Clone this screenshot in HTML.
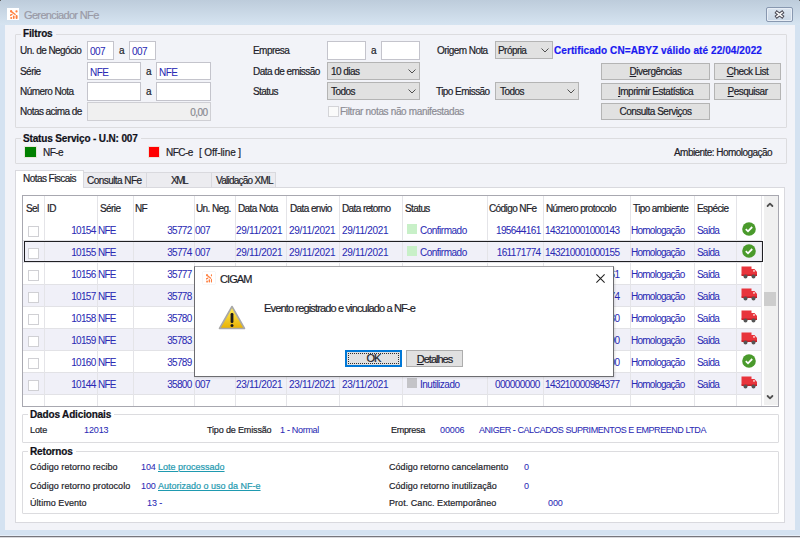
<!DOCTYPE html>
<html><head><meta charset="utf-8"><style>
html,body{margin:0;padding:0;}
body{width:800px;height:538px;overflow:hidden;position:relative;background:#d4e2f1;font-family:"Liberation Sans",sans-serif;}
.t{position:absolute;white-space:nowrap;-webkit-text-stroke:0.2px currentColor;}
</style></head><body>
<div style="position:absolute;left:0;top:0;width:800px;height:25px;background:linear-gradient(#bdccdb,#d6e4f1)"></div>
<div style="position:absolute;left:7px;top:8px;width:12px;height:12px;background:#fff"></div>
<svg style="position:absolute;left:10px;top:10px" width="7.6" height="9" viewBox="0 0 7.6 9"><g fill="#ff8040"><rect x="0" y="0" width="2.2" height="2.4" rx="1"/><rect x="5.4" y="0.3" width="2.2" height="2.2" rx="1"/>
<path d="M1.8 1 L6 4.2 L5.2 5.3 L1 2.2Z"/><path d="M0 4.4 L2.8 3.4 L2.4 5 L0 6.2Z"/>
<rect x="0.2" y="7" width="2" height="2" rx="0.9"/><rect x="2.9" y="5.6" width="1.7" height="3.4" rx="0.8"/><rect x="5.6" y="5" width="2" height="4" rx="0.9"/></g></svg>
<div class="t" style="left:24px;top:10px;font-size:11px;line-height:11px;color:#9a9aa6;letter-spacing:-0.65px;">Gerenciador NFe</div>
<div style="position:absolute;left:766px;top:7px;width:27px;height:15px;box-sizing:border-box;border:1px solid #8898b0;border-radius:2px;background:linear-gradient(#dbe5f0,#c9d7e6);box-shadow:inset 0 0 0 1px #e8eef6"></div>
<svg style="position:absolute;left:773px;top:9px" width="13" height="11" viewBox="0 0 13 11">
<path d="M4 3.6 L9 7.4 M9 3.6 L4 7.4" stroke="#4a4a56" stroke-width="3.6" stroke-linecap="square"/>
<path d="M4 3.6 L9 7.4 M9 3.6 L4 7.4" stroke="#f6f6f6" stroke-width="1.7" stroke-linecap="square"/></svg>
<div style="position:absolute;left:5px;top:25px;width:790px;height:505px;box-sizing:border-box;background:#f2f3f8;"></div>
<div style="position:absolute;left:0px;top:0px;width:1px;height:1px;box-sizing:border-box;background:#606060;"></div>
<div style="position:absolute;left:799px;top:0px;width:1px;height:1px;box-sizing:border-box;background:#606060;"></div>
<div style="position:absolute;left:0px;top:535px;width:800px;height:1px;box-sizing:border-box;background:#e6eef8;"></div>
<div style="position:absolute;left:0px;top:536px;width:800px;height:1px;box-sizing:border-box;background:#76767c;"></div>
<div style="position:absolute;left:0px;top:537px;width:800px;height:1px;box-sizing:border-box;background:#d8d8dc;"></div>
<div style="position:absolute;left:15px;top:34px;width:772px;height:94px;box-sizing:border-box;border:1px solid #dcdcdf;border-radius:1px;"></div>
<div class="t" style="left:21px;top:29px;font-size:10px;line-height:10px;color:#101018;letter-spacing:-0.15px;font-weight:bold;background:#f2f3f8;padding:0 3px 0 2px;">Filtros</div>
<div class="t" style="left:20px;top:46px;font-size:10px;line-height:10px;color:#1e1e2a;letter-spacing:-0.55px;">Un. de Negócio</div>
<div class="t" style="left:20px;top:67px;font-size:10px;line-height:10px;color:#1e1e2a;letter-spacing:-0.55px;">Série</div>
<div class="t" style="left:20px;top:87px;font-size:10px;line-height:10px;color:#1e1e2a;letter-spacing:-0.55px;">Número Nota</div>
<div class="t" style="left:20px;top:107px;font-size:10px;line-height:10px;color:#1e1e2a;letter-spacing:-0.55px;">Notas acima de</div>
<div style="position:absolute;left:87px;top:41px;width:27px;height:19px;box-sizing:border-box;background:#fff;border:1px solid #c4c4cc;"></div>
<div class="t" style="left:90px;top:47px;font-size:10px;line-height:10px;color:#2a2ab4;letter-spacing:-0.55px;-webkit-text-stroke:0.05px currentColor;">007</div>
<div class="t" style="left:119px;top:46px;font-size:10px;line-height:10px;color:#1e1e2a;letter-spacing:-0.55px;">a</div>
<div style="position:absolute;left:129px;top:41px;width:27px;height:19px;box-sizing:border-box;background:#fff;border:1px solid #c4c4cc;"></div>
<div class="t" style="left:132px;top:47px;font-size:10px;line-height:10px;color:#2a2ab4;letter-spacing:-0.55px;-webkit-text-stroke:0.05px currentColor;">007</div>
<div style="position:absolute;left:87px;top:62px;width:54px;height:18px;box-sizing:border-box;background:#fff;border:1px solid #c4c4cc;"></div>
<div class="t" style="left:90px;top:68px;font-size:10px;line-height:10px;color:#2a2ab4;letter-spacing:-0.55px;-webkit-text-stroke:0.05px currentColor;">NFE</div>
<div class="t" style="left:146px;top:67px;font-size:10px;line-height:10px;color:#1e1e2a;letter-spacing:-0.55px;">a</div>
<div style="position:absolute;left:156px;top:62px;width:55px;height:18px;box-sizing:border-box;background:#fff;border:1px solid #c4c4cc;"></div>
<div class="t" style="left:159px;top:68px;font-size:10px;line-height:10px;color:#2a2ab4;letter-spacing:-0.55px;-webkit-text-stroke:0.05px currentColor;">NFE</div>
<div style="position:absolute;left:87px;top:82px;width:54px;height:19px;box-sizing:border-box;background:#fff;border:1px solid #c4c4cc;"></div>
<div class="t" style="left:146px;top:87px;font-size:10px;line-height:10px;color:#1e1e2a;letter-spacing:-0.55px;">a</div>
<div style="position:absolute;left:156px;top:82px;width:55px;height:19px;box-sizing:border-box;background:#fff;border:1px solid #c4c4cc;"></div>
<div style="position:absolute;left:87px;top:102px;width:124px;height:19px;box-sizing:border-box;background:#f0f0f0;border:1px solid #cfcfd4;"></div>
<div class="t" style="right:593px;top:108px;font-size:10px;line-height:10px;color:#8a8a90;letter-spacing:-0.55px;margin-right:-0.55px;">0,00</div>
<div class="t" style="left:253px;top:46px;font-size:10px;line-height:10px;color:#1e1e2a;letter-spacing:-0.55px;">Empresa</div>
<div class="t" style="left:253px;top:67px;font-size:10px;line-height:10px;color:#1e1e2a;letter-spacing:-0.55px;">Data de emissão</div>
<div class="t" style="left:253px;top:87px;font-size:10px;line-height:10px;color:#1e1e2a;letter-spacing:-0.55px;">Status</div>
<div style="position:absolute;left:327px;top:41px;width:39px;height:19px;box-sizing:border-box;background:#fff;border:1px solid #c4c4cc;"></div>
<div class="t" style="left:371px;top:46px;font-size:10px;line-height:10px;color:#1e1e2a;letter-spacing:-0.55px;">a</div>
<div style="position:absolute;left:381px;top:41px;width:39px;height:19px;box-sizing:border-box;background:#fff;border:1px solid #c4c4cc;"></div>
<div style="position:absolute;left:327px;top:62px;width:93px;height:18px;box-sizing:border-box;background:#e1e1e1;border:1px solid #b4b4b4;"></div>
<div class="t" style="left:331px;top:67px;font-size:10px;line-height:10px;color:#1e1e2a;letter-spacing:-0.55px;">10 dias</div>
<svg style="position:absolute;left:408px;top:69px" width="8" height="5" viewBox="0 0 8 5"><path d="M0.5 0.5 L4 4 L7.5 0.5" stroke="#505050" stroke-width="1" fill="none"/></svg>
<div style="position:absolute;left:327px;top:82px;width:93px;height:18px;box-sizing:border-box;background:#e1e1e1;border:1px solid #b4b4b4;"></div>
<div class="t" style="left:331px;top:87px;font-size:10px;line-height:10px;color:#1e1e2a;letter-spacing:-0.55px;">Todos</div>
<svg style="position:absolute;left:408px;top:89px" width="8" height="5" viewBox="0 0 8 5"><path d="M0.5 0.5 L4 4 L7.5 0.5" stroke="#505050" stroke-width="1" fill="none"/></svg>
<div style="position:absolute;left:328px;top:106px;width:11px;height:11px;box-sizing:border-box;background:#fafafa;border:1px solid #d4d4d8;"></div>
<div class="t" style="left:340px;top:107px;font-size:10px;line-height:10px;color:#8c8c94;letter-spacing:-0.35px;">Filtrar notas não manifestadas</div>
<div class="t" style="left:437px;top:46px;font-size:10px;line-height:10px;color:#1e1e2a;letter-spacing:-0.55px;">Origem Nota</div>
<div class="t" style="left:436px;top:87px;font-size:10px;line-height:10px;color:#1e1e2a;letter-spacing:-0.55px;">Tipo Emissão</div>
<div style="position:absolute;left:495px;top:41px;width:58px;height:18px;box-sizing:border-box;background:#e1e1e1;border:1px solid #b4b4b4;"></div>
<div class="t" style="left:498px;top:46px;font-size:10px;line-height:10px;color:#1e1e2a;letter-spacing:-0.55px;">Própria</div>
<svg style="position:absolute;left:541px;top:48px" width="8" height="5" viewBox="0 0 8 5"><path d="M0.5 0.5 L4 4 L7.5 0.5" stroke="#505050" stroke-width="1" fill="none"/></svg>
<div style="position:absolute;left:495px;top:82px;width:84px;height:18px;box-sizing:border-box;background:#e1e1e1;border:1px solid #b4b4b4;"></div>
<div class="t" style="left:500px;top:87px;font-size:10px;line-height:10px;color:#1e1e2a;letter-spacing:-0.55px;">Todos</div>
<svg style="position:absolute;left:567px;top:89px" width="8" height="5" viewBox="0 0 8 5"><path d="M0.5 0.5 L4 4 L7.5 0.5" stroke="#505050" stroke-width="1" fill="none"/></svg>
<div class="t" style="left:554px;top:46px;font-size:10px;line-height:10px;color:#1a1af0;letter-spacing:0.09px;font-weight:bold;">Certificado CN=ABYZ válido até 22/04/2022</div>
<div style="position:absolute;left:601px;top:63px;width:109px;height:17px;box-sizing:border-box;background:#e1e1e1;border:1px solid #b4b4b4;"></div>
<div class="t" style="left:601px;width:109px;text-align:center;top:67px;font-size:10px;line-height:10px;color:#1e1e2a;letter-spacing:-0.5px"><u>D</u>ivergências</div>
<div style="position:absolute;left:714px;top:63px;width:67px;height:17px;box-sizing:border-box;background:#e1e1e1;border:1px solid #b4b4b4;"></div>
<div class="t" style="left:714px;width:67px;text-align:center;top:67px;font-size:10px;line-height:10px;color:#1e1e2a;letter-spacing:-0.5px"><u>C</u>heck List</div>
<div style="position:absolute;left:601px;top:83px;width:109px;height:17px;box-sizing:border-box;background:#e1e1e1;border:1px solid #b4b4b4;"></div>
<div class="t" style="left:601px;width:109px;text-align:center;top:87px;font-size:10px;line-height:10px;color:#1e1e2a;letter-spacing:-0.5px"><u>I</u>mprimir Estatística</div>
<div style="position:absolute;left:714px;top:83px;width:67px;height:17px;box-sizing:border-box;background:#e1e1e1;border:1px solid #b4b4b4;"></div>
<div class="t" style="left:714px;width:67px;text-align:center;top:87px;font-size:10px;line-height:10px;color:#1e1e2a;letter-spacing:-0.5px"><u>P</u>esquisar</div>
<div style="position:absolute;left:601px;top:103px;width:109px;height:17px;box-sizing:border-box;background:#e1e1e1;border:1px solid #b4b4b4;"></div>
<div class="t" style="left:601px;width:109px;text-align:center;top:107px;font-size:10px;line-height:10px;color:#1e1e2a;letter-spacing:-0.5px">Consulta Servi<u>ç</u>os</div>
<div style="position:absolute;left:15px;top:138px;width:772px;height:26px;box-sizing:border-box;border:1px solid #dcdcdf;border-radius:1px;"></div>
<div class="t" style="left:21px;top:134px;font-size:10px;line-height:10px;color:#101018;letter-spacing:-0.15px;font-weight:bold;background:#f2f3f8;padding:0 3px 0 2px;">Status Serviço - U.N: 007</div>
<div style="position:absolute;left:24px;top:146px;width:13px;height:12px;box-sizing:border-box;background:#008000;border:1px solid #e6e6d8;"></div>
<div class="t" style="left:43px;top:148px;font-size:10px;line-height:10px;color:#1e1e2a;letter-spacing:-0.55px;">NF-e</div>
<div style="position:absolute;left:148px;top:146px;width:12px;height:12px;box-sizing:border-box;background:#ff0000;border:1px solid #eee0d8;"></div>
<div class="t" style="left:166px;top:148px;font-size:10px;line-height:10px;color:#1e1e2a;letter-spacing:-0.55px;">NFC-e</div>
<div class="t" style="left:199px;top:148px;font-size:10px;line-height:10px;color:#1e1e2a;letter-spacing:-0.1px;">[ Off-line ]</div>
<div class="t" style="left:674px;top:148px;font-size:10px;line-height:10px;color:#1e1e2a;letter-spacing:-0.55px;">Ambiente: Homologação</div>
<div style="position:absolute;left:15px;top:187px;width:770px;height:336px;box-sizing:border-box;background:#fff;border:1px solid #d9d9de;"></div>
<div style="position:absolute;left:83px;top:172px;width:64px;height:16px;box-sizing:border-box;background:#ececf0;border:1px solid #d9d9de;"></div>
<div style="position:absolute;left:146px;top:172px;width:66px;height:16px;box-sizing:border-box;background:#ececf0;border:1px solid #d9d9de;"></div>
<div style="position:absolute;left:211px;top:172px;width:65px;height:16px;box-sizing:border-box;background:#ececf0;border:1px solid #d9d9de;"></div>
<div style="position:absolute;left:15px;top:170px;width:69px;height:18px;box-sizing:border-box;background:#fff;border:1px solid #d9d9de;border-bottom:none;"></div>
<div class="t" style="left:23px;top:174px;font-size:10px;line-height:10px;color:#1e1e2a;letter-spacing:-0.55px;">Notas Fiscais</div>
<div class="t" style="left:87px;top:176px;font-size:10px;line-height:10px;color:#1e1e2a;letter-spacing:-0.55px;">Consulta NFe</div>
<div class="t" style="left:171px;top:176px;font-size:10px;line-height:10px;color:#1e1e2a;letter-spacing:-1.5px;">XML</div>
<div class="t" style="left:216px;top:176px;font-size:10px;line-height:10px;color:#1e1e2a;letter-spacing:-0.75px;">Validação XML</div>
<div style="position:absolute;left:22px;top:195px;width:757px;height:212px;box-sizing:border-box;background:#fff;border:1px solid #a8a8b0;"></div>
<div style="position:absolute;left:23px;top:240px;width:738px;height:22px;box-sizing:border-box;background:#f0f0f8;"></div>
<div style="position:absolute;left:23px;top:240px;width:738px;height:1px;box-sizing:border-box;background:#e2e2e6;"></div>
<div style="position:absolute;left:23px;top:262px;width:738px;height:1px;box-sizing:border-box;background:#e2e2e6;"></div>
<div style="position:absolute;left:23px;top:284px;width:738px;height:22px;box-sizing:border-box;background:#f0f0f8;"></div>
<div style="position:absolute;left:23px;top:284px;width:738px;height:1px;box-sizing:border-box;background:#e2e2e6;"></div>
<div style="position:absolute;left:23px;top:306px;width:738px;height:1px;box-sizing:border-box;background:#e2e2e6;"></div>
<div style="position:absolute;left:23px;top:328px;width:738px;height:22px;box-sizing:border-box;background:#f0f0f8;"></div>
<div style="position:absolute;left:23px;top:328px;width:738px;height:1px;box-sizing:border-box;background:#e2e2e6;"></div>
<div style="position:absolute;left:23px;top:350px;width:738px;height:1px;box-sizing:border-box;background:#e2e2e6;"></div>
<div style="position:absolute;left:23px;top:372px;width:738px;height:22px;box-sizing:border-box;background:#f0f0f8;"></div>
<div style="position:absolute;left:23px;top:372px;width:738px;height:1px;box-sizing:border-box;background:#e2e2e6;"></div>
<div style="position:absolute;left:23px;top:394px;width:738px;height:1px;box-sizing:border-box;background:#e2e2e6;"></div>
<div style="position:absolute;left:44px;top:196px;width:1px;height:210px;box-sizing:border-box;background:#e4e4e8;"></div>
<div style="position:absolute;left:97px;top:196px;width:1px;height:210px;box-sizing:border-box;background:#e4e4e8;"></div>
<div style="position:absolute;left:133px;top:196px;width:1px;height:210px;box-sizing:border-box;background:#e4e4e8;"></div>
<div style="position:absolute;left:194px;top:196px;width:1px;height:210px;box-sizing:border-box;background:#e4e4e8;"></div>
<div style="position:absolute;left:235px;top:196px;width:1px;height:210px;box-sizing:border-box;background:#e4e4e8;"></div>
<div style="position:absolute;left:286px;top:196px;width:1px;height:210px;box-sizing:border-box;background:#e4e4e8;"></div>
<div style="position:absolute;left:339px;top:196px;width:1px;height:210px;box-sizing:border-box;background:#e4e4e8;"></div>
<div style="position:absolute;left:402px;top:196px;width:1px;height:210px;box-sizing:border-box;background:#e4e4e8;"></div>
<div style="position:absolute;left:487px;top:196px;width:1px;height:210px;box-sizing:border-box;background:#e4e4e8;"></div>
<div style="position:absolute;left:543px;top:196px;width:1px;height:210px;box-sizing:border-box;background:#e4e4e8;"></div>
<div style="position:absolute;left:630px;top:196px;width:1px;height:210px;box-sizing:border-box;background:#e4e4e8;"></div>
<div style="position:absolute;left:694px;top:196px;width:1px;height:210px;box-sizing:border-box;background:#e4e4e8;"></div>
<div style="position:absolute;left:736px;top:196px;width:1px;height:210px;box-sizing:border-box;background:#e4e4e8;"></div>
<div style="position:absolute;left:761px;top:196px;width:1px;height:210px;box-sizing:border-box;background:#e4e4e8;"></div>
<div class="t" style="left:26px;top:204px;font-size:10px;line-height:10px;color:#1e1e2a;letter-spacing:-0.6px;">Sel</div>
<div class="t" style="left:47px;top:204px;font-size:10px;line-height:10px;color:#1e1e2a;letter-spacing:-0.6px;">ID</div>
<div class="t" style="left:100px;top:204px;font-size:10px;line-height:10px;color:#1e1e2a;letter-spacing:-0.6px;">Série</div>
<div class="t" style="left:135px;top:204px;font-size:10px;line-height:10px;color:#1e1e2a;letter-spacing:-0.6px;">NF</div>
<div class="t" style="left:196px;top:204px;font-size:10px;line-height:10px;color:#1e1e2a;letter-spacing:-0.6px;">Un. Neg.</div>
<div class="t" style="left:238px;top:204px;font-size:10px;line-height:10px;color:#1e1e2a;letter-spacing:-0.6px;">Data Nota</div>
<div class="t" style="left:290px;top:204px;font-size:10px;line-height:10px;color:#1e1e2a;letter-spacing:-0.6px;">Data envio</div>
<div class="t" style="left:342px;top:204px;font-size:10px;line-height:10px;color:#1e1e2a;letter-spacing:-0.6px;">Data retorno</div>
<div class="t" style="left:405px;top:204px;font-size:10px;line-height:10px;color:#1e1e2a;letter-spacing:-0.6px;">Status</div>
<div class="t" style="left:489px;top:204px;font-size:10px;line-height:10px;color:#1e1e2a;letter-spacing:-0.6px;">Código NFe</div>
<div class="t" style="left:546px;top:204px;font-size:10px;line-height:10px;color:#1e1e2a;letter-spacing:-0.6px;">Número protocolo</div>
<div class="t" style="left:633px;top:204px;font-size:10px;line-height:10px;color:#1e1e2a;letter-spacing:-0.6px;">Tipo ambiente</div>
<div class="t" style="left:697px;top:204px;font-size:10px;line-height:10px;color:#1e1e2a;letter-spacing:-0.6px;">Espécie</div>
<div style="position:absolute;left:28px;top:226px;width:11px;height:11px;box-sizing:border-box;background:#fff;border:1px solid #d0d0d4;"></div>
<div class="t" style="right:705px;top:226px;font-size:10px;line-height:10px;color:#2a2ab4;letter-spacing:-0.66px;margin-right:-0.66px;-webkit-text-stroke:0.05px currentColor;">10154</div>
<div class="t" style="left:98px;top:226px;font-size:10px;line-height:10px;color:#2a2ab4;letter-spacing:-0.8px;-webkit-text-stroke:0.05px currentColor;">NFE</div>
<div class="t" style="right:609px;top:226px;font-size:10px;line-height:10px;color:#2a2ab4;letter-spacing:-0.66px;margin-right:-0.66px;-webkit-text-stroke:0.05px currentColor;">35772</div>
<div class="t" style="left:195px;top:226px;font-size:10px;line-height:10px;color:#2a2ab4;letter-spacing:-0.6px;-webkit-text-stroke:0.05px currentColor;">007</div>
<div class="t" style="left:236px;top:226px;font-size:10px;line-height:10px;color:#2a2ab4;letter-spacing:-0.3px;-webkit-text-stroke:0.05px currentColor;">29/11/2021</div>
<div class="t" style="left:289px;top:226px;font-size:10px;line-height:10px;color:#2a2ab4;letter-spacing:-0.3px;-webkit-text-stroke:0.05px currentColor;">29/11/2021</div>
<div class="t" style="left:342px;top:226px;font-size:10px;line-height:10px;color:#2a2ab4;letter-spacing:-0.3px;-webkit-text-stroke:0.05px currentColor;">29/11/2021</div>
<div style="position:absolute;left:407px;top:224px;width:10px;height:10px;box-sizing:border-box;background:#c8f0c8;"></div>
<div class="t" style="left:420px;top:226px;font-size:10px;line-height:10px;color:#2a2ab4;letter-spacing:-0.5px;-webkit-text-stroke:0.05px currentColor;">Confirmado</div>
<div class="t" style="right:260px;top:226px;font-size:10px;line-height:10px;color:#2a2ab4;letter-spacing:-0.6px;margin-right:-0.6px;-webkit-text-stroke:0.05px currentColor;">195644161</div>
<div class="t" style="left:545px;top:226px;font-size:10px;line-height:10px;color:#2a2ab4;letter-spacing:-0.6px;-webkit-text-stroke:0.05px currentColor;">143210001000143</div>
<div class="t" style="left:631px;top:226px;font-size:10px;line-height:10px;color:#2a2ab4;letter-spacing:-0.75px;-webkit-text-stroke:0.05px currentColor;">Homologação</div>
<div class="t" style="left:697px;top:226px;font-size:10px;line-height:10px;color:#2a2ab4;letter-spacing:-0.8px;-webkit-text-stroke:0.05px currentColor;">Saída</div>
<svg style="position:absolute;left:742px;top:221.5px" width="14" height="14" viewBox="0 0 14 14"><circle cx="7" cy="7" r="6.8" fill="#4a9a2c"/><path d="M3.8 7.2 L6 9.3 L10.2 5" stroke="#fff" stroke-width="1.8" fill="none"/></svg>
<div style="position:absolute;left:28px;top:248px;width:11px;height:11px;box-sizing:border-box;background:#fff;border:1px solid #d0d0d4;"></div>
<div class="t" style="right:705px;top:248px;font-size:10px;line-height:10px;color:#2a2ab4;letter-spacing:-0.66px;margin-right:-0.66px;-webkit-text-stroke:0.05px currentColor;">10155</div>
<div class="t" style="left:98px;top:248px;font-size:10px;line-height:10px;color:#2a2ab4;letter-spacing:-0.8px;-webkit-text-stroke:0.05px currentColor;">NFE</div>
<div class="t" style="right:609px;top:248px;font-size:10px;line-height:10px;color:#2a2ab4;letter-spacing:-0.66px;margin-right:-0.66px;-webkit-text-stroke:0.05px currentColor;">35774</div>
<div class="t" style="left:195px;top:248px;font-size:10px;line-height:10px;color:#2a2ab4;letter-spacing:-0.6px;-webkit-text-stroke:0.05px currentColor;">007</div>
<div class="t" style="left:236px;top:248px;font-size:10px;line-height:10px;color:#2a2ab4;letter-spacing:-0.3px;-webkit-text-stroke:0.05px currentColor;">29/11/2021</div>
<div class="t" style="left:289px;top:248px;font-size:10px;line-height:10px;color:#2a2ab4;letter-spacing:-0.3px;-webkit-text-stroke:0.05px currentColor;">29/11/2021</div>
<div class="t" style="left:342px;top:248px;font-size:10px;line-height:10px;color:#2a2ab4;letter-spacing:-0.3px;-webkit-text-stroke:0.05px currentColor;">29/11/2021</div>
<div style="position:absolute;left:407px;top:246px;width:10px;height:10px;box-sizing:border-box;background:#c8f0c8;"></div>
<div class="t" style="left:420px;top:248px;font-size:10px;line-height:10px;color:#2a2ab4;letter-spacing:-0.5px;-webkit-text-stroke:0.05px currentColor;">Confirmado</div>
<div class="t" style="right:260px;top:248px;font-size:10px;line-height:10px;color:#2a2ab4;letter-spacing:-0.6px;margin-right:-0.6px;-webkit-text-stroke:0.05px currentColor;">161171774</div>
<div class="t" style="left:545px;top:248px;font-size:10px;line-height:10px;color:#2a2ab4;letter-spacing:-0.6px;-webkit-text-stroke:0.05px currentColor;">143210001000155</div>
<div class="t" style="left:631px;top:248px;font-size:10px;line-height:10px;color:#2a2ab4;letter-spacing:-0.75px;-webkit-text-stroke:0.05px currentColor;">Homologação</div>
<div class="t" style="left:697px;top:248px;font-size:10px;line-height:10px;color:#2a2ab4;letter-spacing:-0.8px;-webkit-text-stroke:0.05px currentColor;">Saída</div>
<svg style="position:absolute;left:742px;top:243.5px" width="14" height="14" viewBox="0 0 14 14"><circle cx="7" cy="7" r="6.8" fill="#4a9a2c"/><path d="M3.8 7.2 L6 9.3 L10.2 5" stroke="#fff" stroke-width="1.8" fill="none"/></svg>
<div style="position:absolute;left:28px;top:270px;width:11px;height:11px;box-sizing:border-box;background:#fff;border:1px solid #d0d0d4;"></div>
<div class="t" style="right:705px;top:270px;font-size:10px;line-height:10px;color:#2a2ab4;letter-spacing:-0.66px;margin-right:-0.66px;-webkit-text-stroke:0.05px currentColor;">10156</div>
<div class="t" style="left:98px;top:270px;font-size:10px;line-height:10px;color:#2a2ab4;letter-spacing:-0.8px;-webkit-text-stroke:0.05px currentColor;">NFE</div>
<div class="t" style="right:609px;top:270px;font-size:10px;line-height:10px;color:#2a2ab4;letter-spacing:-0.66px;margin-right:-0.66px;-webkit-text-stroke:0.05px currentColor;">35777</div>
<div class="t" style="left:195px;top:270px;font-size:10px;line-height:10px;color:#2a2ab4;letter-spacing:-0.6px;-webkit-text-stroke:0.05px currentColor;">007</div>
<div class="t" style="left:236px;top:270px;font-size:10px;line-height:10px;color:#2a2ab4;letter-spacing:-0.3px;-webkit-text-stroke:0.05px currentColor;">29/11/2021</div>
<div class="t" style="left:289px;top:270px;font-size:10px;line-height:10px;color:#2a2ab4;letter-spacing:-0.3px;-webkit-text-stroke:0.05px currentColor;">29/11/2021</div>
<div class="t" style="left:342px;top:270px;font-size:10px;line-height:10px;color:#2a2ab4;letter-spacing:-0.3px;-webkit-text-stroke:0.05px currentColor;">29/11/2021</div>
<div style="position:absolute;left:407px;top:268px;width:10px;height:10px;box-sizing:border-box;background:#c8f0c8;"></div>
<div class="t" style="left:420px;top:270px;font-size:10px;line-height:10px;color:#2a2ab4;letter-spacing:-0.5px;-webkit-text-stroke:0.05px currentColor;">Confirmado</div>
<div class="t" style="right:260px;top:270px;font-size:10px;line-height:10px;color:#2a2ab4;letter-spacing:-0.6px;margin-right:-0.6px;-webkit-text-stroke:0.05px currentColor;">161171775</div>
<div class="t" style="left:545px;top:270px;font-size:10px;line-height:10px;color:#2a2ab4;letter-spacing:-0.6px;-webkit-text-stroke:0.05px currentColor;">143210001000161</div>
<div class="t" style="left:631px;top:270px;font-size:10px;line-height:10px;color:#2a2ab4;letter-spacing:-0.75px;-webkit-text-stroke:0.05px currentColor;">Homologação</div>
<div class="t" style="left:697px;top:270px;font-size:10px;line-height:10px;color:#2a2ab4;letter-spacing:-0.8px;-webkit-text-stroke:0.05px currentColor;">Saída</div>
<svg style="position:absolute;left:741px;top:266px" width="17" height="13" viewBox="0 0 17 13"><rect x="0.5" y="0.5" width="10" height="8.5" fill="#e8343c"/><path d="M10 3 L13.5 3 L16 6 L16 9.5 L10 9.5Z" fill="#e8343c"/><rect x="12" y="4" width="2" height="1.8" fill="#f8b0b0"/><rect x="0.5" y="8.5" width="15.5" height="1.5" fill="#c02028"/><circle cx="4.5" cy="10.5" r="2" fill="#555"/><circle cx="12.5" cy="10.5" r="2" fill="#555"/></svg>
<div style="position:absolute;left:28px;top:292px;width:11px;height:11px;box-sizing:border-box;background:#fff;border:1px solid #d0d0d4;"></div>
<div class="t" style="right:705px;top:292px;font-size:10px;line-height:10px;color:#2a2ab4;letter-spacing:-0.66px;margin-right:-0.66px;-webkit-text-stroke:0.05px currentColor;">10157</div>
<div class="t" style="left:98px;top:292px;font-size:10px;line-height:10px;color:#2a2ab4;letter-spacing:-0.8px;-webkit-text-stroke:0.05px currentColor;">NFE</div>
<div class="t" style="right:609px;top:292px;font-size:10px;line-height:10px;color:#2a2ab4;letter-spacing:-0.66px;margin-right:-0.66px;-webkit-text-stroke:0.05px currentColor;">35778</div>
<div class="t" style="left:195px;top:292px;font-size:10px;line-height:10px;color:#2a2ab4;letter-spacing:-0.6px;-webkit-text-stroke:0.05px currentColor;">007</div>
<div class="t" style="left:236px;top:292px;font-size:10px;line-height:10px;color:#2a2ab4;letter-spacing:-0.3px;-webkit-text-stroke:0.05px currentColor;">29/11/2021</div>
<div class="t" style="left:289px;top:292px;font-size:10px;line-height:10px;color:#2a2ab4;letter-spacing:-0.3px;-webkit-text-stroke:0.05px currentColor;">29/11/2021</div>
<div class="t" style="left:342px;top:292px;font-size:10px;line-height:10px;color:#2a2ab4;letter-spacing:-0.3px;-webkit-text-stroke:0.05px currentColor;">29/11/2021</div>
<div style="position:absolute;left:407px;top:290px;width:10px;height:10px;box-sizing:border-box;background:#c8f0c8;"></div>
<div class="t" style="left:420px;top:292px;font-size:10px;line-height:10px;color:#2a2ab4;letter-spacing:-0.5px;-webkit-text-stroke:0.05px currentColor;">Confirmado</div>
<div class="t" style="right:260px;top:292px;font-size:10px;line-height:10px;color:#2a2ab4;letter-spacing:-0.6px;margin-right:-0.6px;-webkit-text-stroke:0.05px currentColor;">161171776</div>
<div class="t" style="left:545px;top:292px;font-size:10px;line-height:10px;color:#2a2ab4;letter-spacing:-0.6px;-webkit-text-stroke:0.05px currentColor;">143210001000174</div>
<div class="t" style="left:631px;top:292px;font-size:10px;line-height:10px;color:#2a2ab4;letter-spacing:-0.75px;-webkit-text-stroke:0.05px currentColor;">Homologação</div>
<div class="t" style="left:697px;top:292px;font-size:10px;line-height:10px;color:#2a2ab4;letter-spacing:-0.8px;-webkit-text-stroke:0.05px currentColor;">Saída</div>
<svg style="position:absolute;left:741px;top:288px" width="17" height="13" viewBox="0 0 17 13"><rect x="0.5" y="0.5" width="10" height="8.5" fill="#e8343c"/><path d="M10 3 L13.5 3 L16 6 L16 9.5 L10 9.5Z" fill="#e8343c"/><rect x="12" y="4" width="2" height="1.8" fill="#f8b0b0"/><rect x="0.5" y="8.5" width="15.5" height="1.5" fill="#c02028"/><circle cx="4.5" cy="10.5" r="2" fill="#555"/><circle cx="12.5" cy="10.5" r="2" fill="#555"/></svg>
<div style="position:absolute;left:28px;top:314px;width:11px;height:11px;box-sizing:border-box;background:#fff;border:1px solid #d0d0d4;"></div>
<div class="t" style="right:705px;top:314px;font-size:10px;line-height:10px;color:#2a2ab4;letter-spacing:-0.66px;margin-right:-0.66px;-webkit-text-stroke:0.05px currentColor;">10158</div>
<div class="t" style="left:98px;top:314px;font-size:10px;line-height:10px;color:#2a2ab4;letter-spacing:-0.8px;-webkit-text-stroke:0.05px currentColor;">NFE</div>
<div class="t" style="right:609px;top:314px;font-size:10px;line-height:10px;color:#2a2ab4;letter-spacing:-0.66px;margin-right:-0.66px;-webkit-text-stroke:0.05px currentColor;">35780</div>
<div class="t" style="left:195px;top:314px;font-size:10px;line-height:10px;color:#2a2ab4;letter-spacing:-0.6px;-webkit-text-stroke:0.05px currentColor;">007</div>
<div class="t" style="left:236px;top:314px;font-size:10px;line-height:10px;color:#2a2ab4;letter-spacing:-0.3px;-webkit-text-stroke:0.05px currentColor;">29/11/2021</div>
<div class="t" style="left:289px;top:314px;font-size:10px;line-height:10px;color:#2a2ab4;letter-spacing:-0.3px;-webkit-text-stroke:0.05px currentColor;">29/11/2021</div>
<div class="t" style="left:342px;top:314px;font-size:10px;line-height:10px;color:#2a2ab4;letter-spacing:-0.3px;-webkit-text-stroke:0.05px currentColor;">29/11/2021</div>
<div style="position:absolute;left:407px;top:312px;width:10px;height:10px;box-sizing:border-box;background:#c8f0c8;"></div>
<div class="t" style="left:420px;top:314px;font-size:10px;line-height:10px;color:#2a2ab4;letter-spacing:-0.5px;-webkit-text-stroke:0.05px currentColor;">Confirmado</div>
<div class="t" style="right:260px;top:314px;font-size:10px;line-height:10px;color:#2a2ab4;letter-spacing:-0.6px;margin-right:-0.6px;-webkit-text-stroke:0.05px currentColor;">161171777</div>
<div class="t" style="left:545px;top:314px;font-size:10px;line-height:10px;color:#2a2ab4;letter-spacing:-0.6px;-webkit-text-stroke:0.05px currentColor;">143210001000180</div>
<div class="t" style="left:631px;top:314px;font-size:10px;line-height:10px;color:#2a2ab4;letter-spacing:-0.75px;-webkit-text-stroke:0.05px currentColor;">Homologação</div>
<div class="t" style="left:697px;top:314px;font-size:10px;line-height:10px;color:#2a2ab4;letter-spacing:-0.8px;-webkit-text-stroke:0.05px currentColor;">Saída</div>
<svg style="position:absolute;left:741px;top:310px" width="17" height="13" viewBox="0 0 17 13"><rect x="0.5" y="0.5" width="10" height="8.5" fill="#e8343c"/><path d="M10 3 L13.5 3 L16 6 L16 9.5 L10 9.5Z" fill="#e8343c"/><rect x="12" y="4" width="2" height="1.8" fill="#f8b0b0"/><rect x="0.5" y="8.5" width="15.5" height="1.5" fill="#c02028"/><circle cx="4.5" cy="10.5" r="2" fill="#555"/><circle cx="12.5" cy="10.5" r="2" fill="#555"/></svg>
<div style="position:absolute;left:28px;top:336px;width:11px;height:11px;box-sizing:border-box;background:#fff;border:1px solid #d0d0d4;"></div>
<div class="t" style="right:705px;top:336px;font-size:10px;line-height:10px;color:#2a2ab4;letter-spacing:-0.66px;margin-right:-0.66px;-webkit-text-stroke:0.05px currentColor;">10159</div>
<div class="t" style="left:98px;top:336px;font-size:10px;line-height:10px;color:#2a2ab4;letter-spacing:-0.8px;-webkit-text-stroke:0.05px currentColor;">NFE</div>
<div class="t" style="right:609px;top:336px;font-size:10px;line-height:10px;color:#2a2ab4;letter-spacing:-0.66px;margin-right:-0.66px;-webkit-text-stroke:0.05px currentColor;">35783</div>
<div class="t" style="left:195px;top:336px;font-size:10px;line-height:10px;color:#2a2ab4;letter-spacing:-0.6px;-webkit-text-stroke:0.05px currentColor;">007</div>
<div class="t" style="left:236px;top:336px;font-size:10px;line-height:10px;color:#2a2ab4;letter-spacing:-0.3px;-webkit-text-stroke:0.05px currentColor;">29/11/2021</div>
<div class="t" style="left:289px;top:336px;font-size:10px;line-height:10px;color:#2a2ab4;letter-spacing:-0.3px;-webkit-text-stroke:0.05px currentColor;">29/11/2021</div>
<div class="t" style="left:342px;top:336px;font-size:10px;line-height:10px;color:#2a2ab4;letter-spacing:-0.3px;-webkit-text-stroke:0.05px currentColor;">29/11/2021</div>
<div style="position:absolute;left:407px;top:334px;width:10px;height:10px;box-sizing:border-box;background:#c8f0c8;"></div>
<div class="t" style="left:420px;top:336px;font-size:10px;line-height:10px;color:#2a2ab4;letter-spacing:-0.5px;-webkit-text-stroke:0.05px currentColor;">Confirmado</div>
<div class="t" style="right:260px;top:336px;font-size:10px;line-height:10px;color:#2a2ab4;letter-spacing:-0.6px;margin-right:-0.6px;-webkit-text-stroke:0.05px currentColor;">161171778</div>
<div class="t" style="left:545px;top:336px;font-size:10px;line-height:10px;color:#2a2ab4;letter-spacing:-0.6px;-webkit-text-stroke:0.05px currentColor;">143210001000190</div>
<div class="t" style="left:631px;top:336px;font-size:10px;line-height:10px;color:#2a2ab4;letter-spacing:-0.75px;-webkit-text-stroke:0.05px currentColor;">Homologação</div>
<div class="t" style="left:697px;top:336px;font-size:10px;line-height:10px;color:#2a2ab4;letter-spacing:-0.8px;-webkit-text-stroke:0.05px currentColor;">Saída</div>
<svg style="position:absolute;left:741px;top:332px" width="17" height="13" viewBox="0 0 17 13"><rect x="0.5" y="0.5" width="10" height="8.5" fill="#e8343c"/><path d="M10 3 L13.5 3 L16 6 L16 9.5 L10 9.5Z" fill="#e8343c"/><rect x="12" y="4" width="2" height="1.8" fill="#f8b0b0"/><rect x="0.5" y="8.5" width="15.5" height="1.5" fill="#c02028"/><circle cx="4.5" cy="10.5" r="2" fill="#555"/><circle cx="12.5" cy="10.5" r="2" fill="#555"/></svg>
<div style="position:absolute;left:28px;top:358px;width:11px;height:11px;box-sizing:border-box;background:#fff;border:1px solid #d0d0d4;"></div>
<div class="t" style="right:705px;top:358px;font-size:10px;line-height:10px;color:#2a2ab4;letter-spacing:-0.66px;margin-right:-0.66px;-webkit-text-stroke:0.05px currentColor;">10160</div>
<div class="t" style="left:98px;top:358px;font-size:10px;line-height:10px;color:#2a2ab4;letter-spacing:-0.8px;-webkit-text-stroke:0.05px currentColor;">NFE</div>
<div class="t" style="right:609px;top:358px;font-size:10px;line-height:10px;color:#2a2ab4;letter-spacing:-0.66px;margin-right:-0.66px;-webkit-text-stroke:0.05px currentColor;">35789</div>
<div class="t" style="left:195px;top:358px;font-size:10px;line-height:10px;color:#2a2ab4;letter-spacing:-0.6px;-webkit-text-stroke:0.05px currentColor;">007</div>
<div class="t" style="left:236px;top:358px;font-size:10px;line-height:10px;color:#2a2ab4;letter-spacing:-0.3px;-webkit-text-stroke:0.05px currentColor;">29/11/2021</div>
<div class="t" style="left:289px;top:358px;font-size:10px;line-height:10px;color:#2a2ab4;letter-spacing:-0.3px;-webkit-text-stroke:0.05px currentColor;">29/11/2021</div>
<div class="t" style="left:342px;top:358px;font-size:10px;line-height:10px;color:#2a2ab4;letter-spacing:-0.3px;-webkit-text-stroke:0.05px currentColor;">29/11/2021</div>
<div style="position:absolute;left:407px;top:356px;width:10px;height:10px;box-sizing:border-box;background:#c8f0c8;"></div>
<div class="t" style="left:420px;top:358px;font-size:10px;line-height:10px;color:#2a2ab4;letter-spacing:-0.5px;-webkit-text-stroke:0.05px currentColor;">Confirmado</div>
<div class="t" style="right:260px;top:358px;font-size:10px;line-height:10px;color:#2a2ab4;letter-spacing:-0.6px;margin-right:-0.6px;-webkit-text-stroke:0.05px currentColor;">161171779</div>
<div class="t" style="left:545px;top:358px;font-size:10px;line-height:10px;color:#2a2ab4;letter-spacing:-0.6px;-webkit-text-stroke:0.05px currentColor;">143210001000200</div>
<div class="t" style="left:631px;top:358px;font-size:10px;line-height:10px;color:#2a2ab4;letter-spacing:-0.75px;-webkit-text-stroke:0.05px currentColor;">Homologação</div>
<div class="t" style="left:697px;top:358px;font-size:10px;line-height:10px;color:#2a2ab4;letter-spacing:-0.8px;-webkit-text-stroke:0.05px currentColor;">Saída</div>
<svg style="position:absolute;left:742px;top:353.5px" width="14" height="14" viewBox="0 0 14 14"><circle cx="7" cy="7" r="6.8" fill="#4a9a2c"/><path d="M3.8 7.2 L6 9.3 L10.2 5" stroke="#fff" stroke-width="1.8" fill="none"/></svg>
<div style="position:absolute;left:28px;top:380px;width:11px;height:11px;box-sizing:border-box;background:#fff;border:1px solid #d0d0d4;"></div>
<div class="t" style="right:705px;top:380px;font-size:10px;line-height:10px;color:#2a2ab4;letter-spacing:-0.66px;margin-right:-0.66px;-webkit-text-stroke:0.05px currentColor;">10144</div>
<div class="t" style="left:98px;top:380px;font-size:10px;line-height:10px;color:#2a2ab4;letter-spacing:-0.8px;-webkit-text-stroke:0.05px currentColor;">NFE</div>
<div class="t" style="right:609px;top:380px;font-size:10px;line-height:10px;color:#2a2ab4;letter-spacing:-0.66px;margin-right:-0.66px;-webkit-text-stroke:0.05px currentColor;">35800</div>
<div class="t" style="left:195px;top:380px;font-size:10px;line-height:10px;color:#2a2ab4;letter-spacing:-0.6px;-webkit-text-stroke:0.05px currentColor;">007</div>
<div class="t" style="left:236px;top:380px;font-size:10px;line-height:10px;color:#2a2ab4;letter-spacing:-0.3px;-webkit-text-stroke:0.05px currentColor;">23/11/2021</div>
<div class="t" style="left:289px;top:380px;font-size:10px;line-height:10px;color:#2a2ab4;letter-spacing:-0.3px;-webkit-text-stroke:0.05px currentColor;">23/11/2021</div>
<div class="t" style="left:342px;top:380px;font-size:10px;line-height:10px;color:#2a2ab4;letter-spacing:-0.3px;-webkit-text-stroke:0.05px currentColor;">23/11/2021</div>
<div style="position:absolute;left:407px;top:378px;width:10px;height:10px;box-sizing:border-box;background:#c4c4c8;"></div>
<div class="t" style="left:420px;top:380px;font-size:10px;line-height:10px;color:#2a2ab4;letter-spacing:-0.5px;-webkit-text-stroke:0.05px currentColor;">Inutilizado</div>
<div class="t" style="right:261px;top:380px;font-size:10px;line-height:10px;color:#2a2ab4;letter-spacing:-0.6px;margin-right:-0.6px;-webkit-text-stroke:0.05px currentColor;">000000000</div>
<div class="t" style="left:545px;top:380px;font-size:10px;line-height:10px;color:#2a2ab4;letter-spacing:-0.6px;-webkit-text-stroke:0.05px currentColor;">143210000984377</div>
<div class="t" style="left:631px;top:380px;font-size:10px;line-height:10px;color:#2a2ab4;letter-spacing:-0.75px;-webkit-text-stroke:0.05px currentColor;">Homologação</div>
<div class="t" style="left:697px;top:380px;font-size:10px;line-height:10px;color:#2a2ab4;letter-spacing:-0.8px;-webkit-text-stroke:0.05px currentColor;">Saída</div>
<svg style="position:absolute;left:741px;top:376px" width="17" height="13" viewBox="0 0 17 13"><rect x="0.5" y="0.5" width="10" height="8.5" fill="#e8343c"/><path d="M10 3 L13.5 3 L16 6 L16 9.5 L10 9.5Z" fill="#e8343c"/><rect x="12" y="4" width="2" height="1.8" fill="#f8b0b0"/><rect x="0.5" y="8.5" width="15.5" height="1.5" fill="#c02028"/><circle cx="4.5" cy="10.5" r="2" fill="#555"/><circle cx="12.5" cy="10.5" r="2" fill="#555"/></svg>
<div style="position:absolute;left:24px;top:241px;width:739px;height:21px;box-sizing:border-box;border:1px solid #202024;"></div>
<div style="position:absolute;left:764px;top:196px;width:14px;height:209px;box-sizing:border-box;background:#f0f0f0;"></div>
<div style="position:absolute;left:764px;top:292px;width:12px;height:14px;box-sizing:border-box;background:#cdcdcd;"></div>
<svg style="position:absolute;left:766px;top:201px" width="8" height="7" viewBox="0 0 8 7"><path d="M1.6 5 L4 2.6 L6.4 5" stroke="#505050" stroke-width="1.8" fill="none" stroke-linecap="round" stroke-linejoin="round"/></svg>
<svg style="position:absolute;left:766px;top:394px" width="8" height="7" viewBox="0 0 8 7"><path d="M1.6 2 L4 4.4 L6.4 2" stroke="#505050" stroke-width="1.8" fill="none" stroke-linecap="round" stroke-linejoin="round"/></svg>
<div style="position:absolute;left:194px;top:266px;width:420px;height:111px;box-sizing:border-box;background:#fff;border:1px solid #6c6c70;border-top-color:#a4a4a8;box-shadow:1px 1px 2px rgba(0,0,0,0.12);"></div>
<div style="position:absolute;left:203px;top:272px;width:12px;height:12px;background:#fff;box-shadow:0 0 1px #ccc"></div>
<svg style="position:absolute;left:205.5px;top:274px" width="6.8" height="8.5" viewBox="0 0 7.6 9" preserveAspectRatio="none"><g fill="#ff8040"><rect x="0" y="0" width="2.2" height="2.4" rx="1"/><rect x="5.4" y="0.3" width="2.2" height="2.2" rx="1"/>
<path d="M1.8 1 L6 4.2 L5.2 5.3 L1 2.2Z"/><path d="M0 4.4 L2.8 3.4 L2.4 5 L0 6.2Z"/>
<rect x="0.2" y="7" width="2" height="2" rx="0.9"/><rect x="2.9" y="5.6" width="1.7" height="3.4" rx="0.8"/><rect x="5.6" y="5" width="2" height="4" rx="0.9"/></g></svg>
<div class="t" style="left:220px;top:274px;font-size:11px;line-height:11px;color:#1e1e2a;letter-spacing:-0.9px;">CIGAM</div>
<svg style="position:absolute;left:596px;top:274px" width="9" height="9" viewBox="0 0 9 9"><path d="M0.4 0.4 L8.6 8.6 M8.6 0.4 L0.4 8.6" stroke="#202020" stroke-width="1.05"/></svg>
<svg style="position:absolute;left:218px;top:305px" width="28" height="26" viewBox="0 0 28 26">
<defs><linearGradient id="wg" x1="0" y1="0" x2="0" y2="1"><stop offset="0" stop-color="#fff060"/><stop offset="1" stop-color="#e8b000"/></linearGradient></defs>
<path d="M14 1.5 L26.5 23.5 L1.5 23.5 Z" fill="url(#wg)" stroke="#a8a8a8" stroke-width="1.6" stroke-linejoin="round"/>
<rect x="12.6" y="8" width="2.8" height="10" rx="1.2" fill="#1a1a1a"/><circle cx="14" cy="20.5" r="1.5" fill="#1a1a1a"/></svg>
<div class="t" style="left:264px;top:303px;font-size:11px;line-height:11px;color:#1e1e2a;letter-spacing:-0.85px;">Evento registrado e vinculado a NF-e</div>
<div style="position:absolute;left:345px;top:350px;width:57px;height:17px;box-sizing:border-box;background:#e1e1e1;border:2px solid #0078d7;"></div>
<div style="position:absolute;left:348px;top:353px;width:51px;height:11px;box-sizing:border-box;border:1px dotted #303030;"></div>
<div class="t" style="left:345px;width:57px;text-align:center;top:353px;font-size:11px;line-height:11px;color:#1e1e2a;letter-spacing:-1px">OK</div>
<div style="position:absolute;left:406px;top:350px;width:57px;height:17px;box-sizing:border-box;background:#e1e1e1;border:1px solid #adadad;"></div>
<div class="t" style="left:406px;width:57px;text-align:center;top:354px;font-size:11px;line-height:11px;color:#1e1e2a;letter-spacing:-1px"><u>D</u>etalhes</div>
<div style="position:absolute;left:22px;top:414px;width:757px;height:29px;box-sizing:border-box;border:1px solid #dcdcdf;border-radius:1px;"></div>
<div class="t" style="left:28px;top:410px;font-size:10px;line-height:10px;color:#101018;letter-spacing:-0.15px;font-weight:bold;background:#fff;padding:0 3px 0 2px;">Dados Adicionais</div>
<div class="t" style="left:30px;top:426px;font-size:9px;line-height:9px;color:#1e1e2a;letter-spacing:-0.1px;">Lote</div>
<div class="t" style="left:84px;top:426px;font-size:9px;line-height:9px;color:#2a2ab4;letter-spacing:-0.1px;-webkit-text-stroke:0.05px currentColor;">12013</div>
<div class="t" style="left:207px;top:426px;font-size:9px;line-height:9px;color:#1e1e2a;letter-spacing:-0.15px;">Tipo de Emissão</div>
<div class="t" style="left:280px;top:426px;font-size:9px;line-height:9px;color:#2a2ab4;letter-spacing:-0.3px;-webkit-text-stroke:0.05px currentColor;">1 - Normal</div>
<div class="t" style="left:391px;top:426px;font-size:9px;line-height:9px;color:#1e1e2a;letter-spacing:-0.3px;">Empresa</div>
<div class="t" style="left:440px;top:426px;font-size:9px;line-height:9px;color:#2a2ab4;letter-spacing:-0.1px;-webkit-text-stroke:0.05px currentColor;">00006</div>
<div class="t" style="left:479px;top:426px;font-size:9px;line-height:9px;color:#2a2ab4;letter-spacing:-0.45px;-webkit-text-stroke:0.05px currentColor;">ANIGER - CALCADOS SUPRIMENTOS E EMPREEND LTDA</div>
<div style="position:absolute;left:22px;top:451px;width:757px;height:63px;box-sizing:border-box;border:1px solid #dcdcdf;border-radius:1px;"></div>
<div class="t" style="left:28px;top:447px;font-size:10px;line-height:10px;color:#101018;letter-spacing:-0.15px;font-weight:bold;background:#fff;padding:0 3px 0 2px;">Retornos</div>
<div class="t" style="left:30px;top:463px;font-size:9px;line-height:9px;color:#1e1e2a;letter-spacing:0.05px;">Código retorno recibo</div>
<div class="t" style="left:141px;top:463px;font-size:9px;line-height:9px;color:#2a2ab4;letter-spacing:-0.1px;-webkit-text-stroke:0.05px currentColor;">104</div>
<div class="t" style="left:158px;top:463px;font-size:9px;line-height:9px;color:#1f9ab0;letter-spacing:0px;"><u>Lote processado</u></div>
<div class="t" style="left:30px;top:482px;font-size:9px;line-height:9px;color:#1e1e2a;letter-spacing:0.05px;">Código retorno protocolo</div>
<div class="t" style="left:141px;top:482px;font-size:9px;line-height:9px;color:#2a2ab4;letter-spacing:-0.1px;-webkit-text-stroke:0.05px currentColor;">100</div>
<div class="t" style="left:158px;top:482px;font-size:9px;line-height:9px;color:#1f9ab0;letter-spacing:0px;"><u>Autorizado o uso da NF-e</u></div>
<div class="t" style="left:30px;top:499px;font-size:9px;line-height:9px;color:#1e1e2a;letter-spacing:0.05px;">Último Evento</div>
<div class="t" style="left:147px;top:499px;font-size:9px;line-height:9px;color:#2a2ab4;letter-spacing:-0.1px;-webkit-text-stroke:0.05px currentColor;">13 -</div>
<div class="t" style="left:389px;top:463px;font-size:9px;line-height:9px;color:#1e1e2a;letter-spacing:0.05px;">Código retorno cancelamento</div>
<div class="t" style="left:524px;top:463px;font-size:9px;line-height:9px;color:#2a2ab4;letter-spacing:-0.55px;-webkit-text-stroke:0.05px currentColor;">0</div>
<div class="t" style="left:389px;top:482px;font-size:9px;line-height:9px;color:#1e1e2a;letter-spacing:0.05px;">Código retorno inutilização</div>
<div class="t" style="left:524px;top:482px;font-size:9px;line-height:9px;color:#2a2ab4;letter-spacing:-0.55px;-webkit-text-stroke:0.05px currentColor;">0</div>
<div class="t" style="left:389px;top:499px;font-size:9px;line-height:9px;color:#1e1e2a;letter-spacing:0.05px;">Prot. Canc. Extemporâneo</div>
<div class="t" style="left:548px;top:499px;font-size:9px;line-height:9px;color:#2a2ab4;letter-spacing:-0.1px;-webkit-text-stroke:0.05px currentColor;">000</div>
</body></html>
